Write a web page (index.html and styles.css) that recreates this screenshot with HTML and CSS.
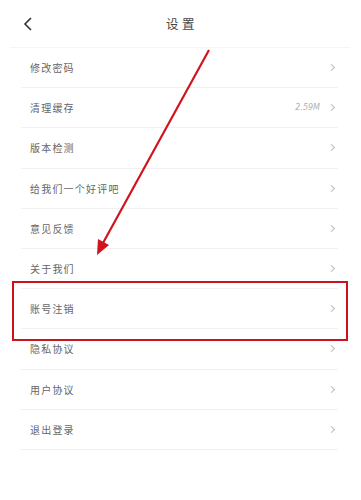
FILE: index.html
```html
<!DOCTYPE html>
<html lang="zh">
<head>
<meta charset="utf-8">
<link rel="stylesheet" href="styles.css">
</head>
<body>
<div class="page">
  <header class="topbar">
    <span class="back"><svg width="10" height="14" viewBox="0 0 10 14"><path d="M8 1 L2 7 L8 13" fill="none" stroke="#333" stroke-width="1.6"/></svg></span>
    <h1 class="title">设置</h1>
  </header>
  <ul class="list">
    <li class="row"><span class="label">修改密码</span><span class="chev"></span></li>
    <li class="row"><span class="label">清理缓存</span><span class="value">2.59M</span><span class="chev"></span></li>
    <li class="row"><span class="label">版本检测</span><span class="chev"></span></li>
    <li class="row"><span class="label">给我们一个好评吧</span><span class="chev"></span></li>
    <li class="row"><span class="label">意见反馈</span><span class="chev"></span></li>
    <li class="row"><span class="label">关于我们</span><span class="chev"></span></li>
    <li class="row"><span class="label">账号注销</span><span class="chev"></span></li>
    <li class="row"><span class="label">隐私协议</span><span class="chev"></span></li>
    <li class="row"><span class="label">用户协议</span><span class="chev"></span></li>
    <li class="row"><span class="label">退出登录</span><span class="chev"></span></li>
  </ul>
  <div class="highlight"></div>
  <svg class="arrow" width="361" height="500" viewBox="0 0 361 500">
    <line x1="209" y1="50" x2="103" y2="243" stroke="#d0141c" stroke-width="2.2"/>
    <polygon points="97,255 98,239 109,245" fill="#d0141c"/>
  </svg>
</div>
</body>
</html>
```
FILE: styles.css
```css
* { box-sizing: border-box; }
html, body { margin: 0; padding: 0; background: #fff; }
body { font-family: "Noto Sans CJK SC", "Noto Sans", sans-serif; }
.page { position: relative; width: 361px; height: 500px; overflow: hidden; background: #fff; }
.topbar {
  height: 48px;
  margin: 0 11px 0 10px;
  border-bottom: 1px solid #f5f5f5;
  display: flex;
  align-items: center;
  justify-content: center;
  position: relative;
}
.back { position: absolute; left: 13px; top: 17px; line-height: 0; }
.title { margin: 0 0 0 4px; font-size: 12.5px; font-weight: 400; color: #444; letter-spacing: 3.5px; }
.list { list-style: none; margin: 0; padding: 0 23px 0 21px; }
.row {
  height: 40.2px;
  display: flex;
  align-items: center;
  border-bottom: 1px solid #f0f0f0;
  padding: 0 4px 0 9px;
}
.label { flex: 1; font-size: 10px; color: #666; letter-spacing: 1.2px; }
.value { font-size: 8px; color: #b0b0b0; font-style: italic; margin-right: 9px; font-family: "DejaVu Sans", sans-serif; }
.chev {
  width: 5px; height: 5px;
  border-top: 1px solid #bbb;
  border-right: 1px solid #bbb;
  transform: rotate(45deg);
}
.highlight {
  position: absolute;
  left: 12px; top: 281px;
  width: 336px; height: 60px;
  border: 2px solid #c8141e;
}
.arrow { position: absolute; left: 0; top: 0; pointer-events: none; }
```
